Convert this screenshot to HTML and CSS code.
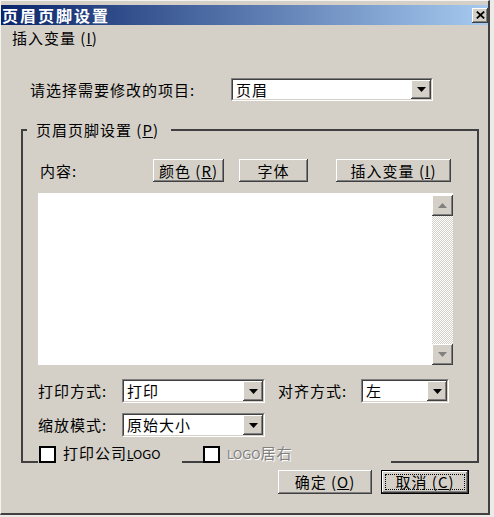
FILE: index.html
```html
<!DOCTYPE html>
<html lang="zh-CN">
<head>
<meta charset="utf-8">
<title>页眉页脚设置</title>
<link rel="stylesheet" href="styles.css">
</head>
<body>
<div class="window">
  <div class="titlebar">
    <span class="title">页眉页脚设置</span>
    <span class="close raised"><svg width="9" height="8" viewBox="0 0 9 8"><path d="M0.8 0.6 L8.2 7.4 M8.2 0.6 L0.8 7.4" stroke="#000" stroke-width="1.8" fill="none"/></svg></span>
  </div>
  <div class="menubar"><span>插入变量 (<u>I</u>)</span></div>

  <div class="item-row">
    <span class="item-label">请选择需要修改的项目:</span>
    <div class="field w-item">
      <div class="field-in">
        <span class="field-value">页眉</span>
        <span class="drop raised"><svg width="9" height="5" viewBox="0 0 9 5"><polygon points="0,0 9,0 4.5,5" fill="#000"/></svg></span>
      </div>
    </div>
  </div>

  <fieldset class="group">
    <legend class="group-title">页眉页脚设置 (<u>P</u>)</legend>

    <div class="content-row">
      <span class="content-label">内容:</span>
      <span class="btn raised w-color">颜色 (<u>R</u>)</span>
      <span class="btn raised w-font">字体</span>
      <span class="btn raised w-insert">插入变量 (<u>I</u>)</span>
    </div>

    <div class="memo">
      <div class="scrollbar">
        <span class="sb-btn raised"><svg width="9" height="5" viewBox="0 0 9 5"><polygon points="4.5,0 9,5 0,5" fill="#808080"/></svg></span>
        <span class="sb-track"></span>
        <span class="sb-btn raised"><svg width="9" height="5" viewBox="0 0 9 5"><polygon points="0,0 9,0 4.5,5" fill="#808080"/></svg></span>
      </div>
    </div>

    <div class="opt-row">
      <span class="opt-label">打印方式:</span>
      <div class="field w-print">
        <div class="field-in">
          <span class="field-value">打印</span>
          <span class="drop raised"><svg width="9" height="5" viewBox="0 0 9 5"><polygon points="0,0 9,0 4.5,5" fill="#000"/></svg></span>
        </div>
      </div>
      <span class="opt-label align-label">对齐方式:</span>
      <div class="field w-align">
        <div class="field-in">
          <span class="field-value">左</span>
          <span class="drop raised"><svg width="9" height="5" viewBox="0 0 9 5"><polygon points="0,0 9,0 4.5,5" fill="#000"/></svg></span>
        </div>
      </div>
    </div>

    <div class="opt-row second">
      <span class="opt-label">缩放模式:</span>
      <div class="field w-print">
        <div class="field-in">
          <span class="field-value">原始大小</span>
          <span class="drop raised"><svg width="9" height="5" viewBox="0 0 9 5"><polygon points="0,0 9,0 4.5,5" fill="#000"/></svg></span>
        </div>
      </div>
    </div>

    <div class="check-row">
      <span class="seg seg-a"></span>
      <label class="check w-check1"><span class="box"></span><span class="check-text">打印公司<span class="latin"><u>L</u>OGO</span></span></label>
      <span class="seg seg-b"></span>
      <label class="check w-check2 disabled"><span class="box"></span><span class="check-text"><span class="latin">LOGO</span>居右</span></label>
      <span class="seg seg-c"></span>
    </div>
  </fieldset>

  <div class="footer">
    <span class="btn raised w-ok">确定 (<u>O</u>)</span>
    <span class="btn-default w-cancel"><span class="btn raised inner"><span class="focus">取消 (<u>C</u>)</span></span></span>
  </div>
</div>
</body>
</html>
```

FILE: styles.css
```css
* { box-sizing: border-box; margin: 0; padding: 0; }

body {
  margin: 0;
  width: 494px;
  height: 517px;
  overflow: hidden;
  background: #ecebe8;
  font-family: "Noto Sans CJK SC", "Noto Sans", sans-serif;
  font-size: 15px;
  letter-spacing: 1px;
  color: #000;
}

u { text-decoration: underline; text-underline-offset: 1px; }

.window {
  width: 490px;
  height: 515px;
  background: #d4d0c8;
  border-left: 1px solid #f4f3f0;
  border-top: 1px solid #f4f3f0;
  border-right: 2px solid #404040;
  border-bottom: 2px solid #404040;
  padding-top: 4px;
}

.raised {
  background: #d4d0c8;
  box-shadow: inset -1px -1px #404040, inset 1px 1px #ffffff, inset -2px -2px #808080, inset 2px 2px #d4d0c8;
}

/* title bar */
.titlebar {
  height: 20px;
  display: flex;
  align-items: center;
  justify-content: space-between;
  background: linear-gradient(to right, #0a246a, #a6caf0);
  padding-left: 1px;
}
.title {
  color: #fff;
  font-weight: bold;
  font-size: 16px;
  letter-spacing: 2px;
  line-height: 20px;
}
.close {
  width: 16px;
  height: 15px;
  display: flex;
  align-items: center;
  justify-content: center;
}

/* menu */
.menubar {
  height: 22px;
  margin-top: 2px;
  padding-left: 11px;
  line-height: 22px;
}

/* item row */
.item-row {
  display: flex;
  align-items: center;
  height: 23px;
  margin-top: 29px;
  padding-left: 29px;
}
.item-label { width: 201px; line-height: 23px; }

/* combo fields */
.field {
  display: flex;
  height: 24px;
  border: 1px solid;
  border-color: #808080 #ffffff #ffffff #808080;
}
.item-row .field { height: 23px; }
.field-in {
  flex: 1;
  display: flex;
  border: 1px solid;
  border-color: #404040 #d4d0c8 #d4d0c8 #404040;
  background: #fff;
}
.field-value {
  flex: 1;
  padding-left: 3px;
  line-height: 19px;
  white-space: nowrap;
}
.drop {
  width: 20px;
  display: flex;
  align-items: center;
  justify-content: center;
}
.w-item { width: 202px; }
.w-print { width: 143px; }
.w-align { width: 88px; }

/* group */
.group {
  margin: 20px 0 0 20px;
  width: 458px;
  min-width: 0;
  border: 2px solid #404040;
  border-bottom: none;
  padding: 0;
}
.group-title {
  margin-left: 4px;
  padding: 0 12px 0 9px;
  line-height: 18px;
  height: 18px;
}

.content-row {
  display: flex;
  align-items: center;
  height: 23px;
  margin-top: 20px;
  padding-left: 17px;
}
.content-label { width: 113px; }

.btn {
  display: flex;
  align-items: center;
  justify-content: center;
  height: 23px;
  line-height: 20px;
  white-space: nowrap;
}
.w-color { width: 71px; }
.w-font { width: 69px; margin-left: 15px; }
.w-insert { width: 115px; margin-left: 28px; }

/* memo */
.memo {
  margin: 11px 0 0 15px;
  width: 415px;
  height: 172px;
  background: #fff;
  display: flex;
  justify-content: flex-end;
  padding: 2px 0 0 0;
}
.scrollbar {
  width: 21px;
  display: flex;
  flex-direction: column;
}
.sb-btn {
  width: 21px;
  height: 21px;
  display: flex;
  align-items: center;
  justify-content: center;
}
.sb-track {
  flex: 1;
  background: repeating-conic-gradient(#d4d0c8 0 25%, #ffffff 0 50%) 0 0 / 2px 2px;
}

/* option rows */
.opt-row {
  display: flex;
  align-items: center;
  height: 24px;
  margin-top: 14px;
  padding-left: 15px;
}
.opt-row.second { margin-top: 10px; }
.opt-label { width: 84px; line-height: 24px; }
.align-label { width: 83px; margin-left: 13px; }

/* checkbox row over the bottom edge */
.check-row {
  display: flex;
  align-items: flex-end;
  height: 17px;
  margin-top: 9px;
}
.seg {
  align-self: stretch;
  border-bottom: 2px solid #404040;
}
.seg-a { width: 15px; }
.seg-b { width: 21px; }
.seg-c { flex: 1; }
.check {
  display: flex;
  align-items: flex-end;
  height: 17px;
}
.w-check1 { width: 144px; padding-left: 1px; }
.w-check2 { width: 188px; padding-left: 0; }
.box {
  width: 17px;
  height: 17px;
  border: 2px solid #000;
  background: #fff;
}
.check-text {
  margin-left: 7px;
  line-height: 17px;
  white-space: nowrap;
}
.latin {
  font-family: "DejaVu Sans Condensed", "Liberation Sans Narrow", "Liberation Sans", sans-serif;
  font-size: 13px;
  letter-spacing: 0;
}
.disabled .check-text {
  color: #808080;
  text-shadow: 1px 1px #ffffff;
}

/* footer */
.footer {
  display: flex;
  align-items: flex-start;
  margin-top: 7px;
  padding-left: 277px;
}
.w-ok { width: 94px; height: 24px; }
.btn-default {
  display: flex;
  width: 88px;
  height: 24px;
  margin-left: 9px;
  border: 1px solid #000;
}
.btn.inner { flex: 1; height: auto; padding: 3px; }
.focus {
  flex: 1;
  align-self: stretch;
  display: flex;
  align-items: center;
  justify-content: center;
  border: 1px dotted #000;
}
```
